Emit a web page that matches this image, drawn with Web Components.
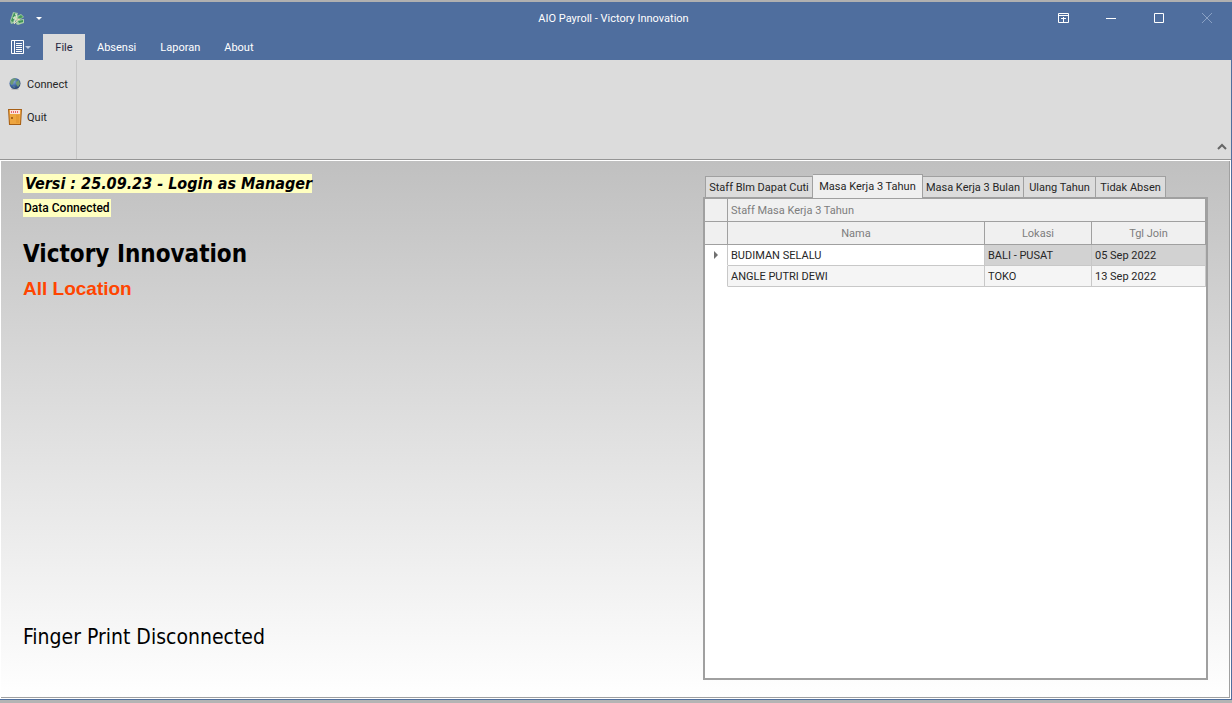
<!DOCTYPE html>
<html lang="id">
<head>
<meta charset="utf-8">
<title>AIO Payroll - Victory Innovation</title>
<style>
  html, body { height: 100%; margin: 0; }
  body {
    --ui: Tahoma, Roboto, sans-serif;
    --display: Tahoma, "DejaVu Sans Condensed", "DejaVu Sans", sans-serif;
    --blue: #4f6e9e;
    --face: #dcdcdc;
    --line: #a0a0a0;
    font: 11px/16px var(--ui);
    color: #262626;
    background: #b4b4b4;
  }
</style>
</head>
<body>
<app-window>
  <title-bar slot="title">AIO Payroll - Victory Innovation</title-bar>
  <ribbon-tabs slot="tabs"></ribbon-tabs>
  <ribbon-panel slot="ribbon">
    <ribbon-button icon="globe">Connect</ribbon-button>
    <ribbon-button icon="door">Quit</ribbon-button>
  </ribbon-panel>
  <status-summary></status-summary>
  <staff-panel></staff-panel>
</app-window>

<script>
const define = (name, html, setup) => customElements.define(name, class extends HTMLElement {
  connectedCallback() {
    if (this.shadowRoot) return;
    const root = this.attachShadow({ mode: 'open' });
    root.innerHTML = html;
    if (setup) setup(this, root);
  }
});

define('app-window', `
  <style>
    :host { display: flex; flex-direction: column; box-sizing: border-box; min-height: 100vh;
      border-top: 2px solid #b0b0b0; border-bottom: 3px solid #b4b4b4; }
    .frame { flex: 1; display: flex; flex-direction: column; background: var(--blue);
      border-right: 1px solid var(--blue); border-bottom: 1px solid var(--blue); }
    main { flex: 1; display: flex; background: linear-gradient(#c0c0c0, #fff); border: 1px solid #fff; }
    .edge { flex: 1; display: flex; border-right: 1px solid var(--line); border-bottom: 1px solid var(--line); }
  </style>
  <div class="frame">
    <slot name="title"></slot>
    <slot name="tabs"></slot>
    <slot name="ribbon"></slot>
    <main><div class="edge"><slot></slot></div></main>
  </div>`);

define('title-bar', `
  <style>
    :host { display: grid; grid-template-columns: 1fr auto 1fr; align-items: center; height: 32px; color: #fff; }
    .start { display: flex; align-items: center; gap: 5px; padding-left: 8px; }
    .end { display: flex; justify-content: flex-end; }
    .name { padding: 2px 4px 0 0; }
    button { border: 0; padding: 0; background: none; color: inherit; display: grid; place-items: center; height: 32px; }
    .end button { width: 48px; }
    .start button { width: 16px; }
    svg { display: block; }
  </style>
  <div class="start">
    <svg width="18" height="18" viewBox="0 0 18 18" aria-hidden="true">
      <path d="M2 12 5 3l5 1-3 10-4 1z" fill="#9cc7a0"/>
      <path d="M3 12l3-8 2 1-3 8z" fill="#3f9458"/>
      <path d="M7 5l2 1-3 8" fill="none" stroke="#dcebd6"/>
      <path d="M5 8l1 2M7 7l-1 3" stroke="#d4e6cc"/>
      <path d="M9 7l4-2 3 3-5 3-2-1z" fill="#9fcba0"/>
      <path d="M10 8l3-2 2 2-4 2z" fill="#439a5a"/>
      <path d="M9 11l7-1v4l-6 2-2-1z" fill="#a9d0a6"/>
      <path d="M10 12l5-1v2l-4 1z" fill="#3f9458"/>
      <path d="M8 8l1 4-3 3M9 11l3-1" fill="none" stroke="#e8dcb4" stroke-width="1"/>
    </svg>
    <button type="button" aria-label="Quick access"><svg width="6" height="3"><path d="M0 0h6L3 3z" fill="#fff"/></svg></button>
  </div>
  <div class="name"><slot></slot></div>
  <div class="end">
    <button type="button" aria-label="Ribbon display options"><svg width="11" height="10" fill="none" stroke="#fff"><path d="M.5.5h10v9H.5zM0 2.500h11M5.500 4v5M3 5.500h5"/></svg></button>
    <button type="button" aria-label="Minimize"><svg width="10" height="10" stroke="#fff"><path d="M0 5.500h10"/></svg></button>
    <button type="button" aria-label="Maximize"><svg width="10" height="10" fill="none" stroke="#fff"><path d="M.5.5h9v9h-9z"/></svg></button>
    <button type="button" aria-label="Close"><svg width="10" height="10" stroke="#8aa1c4"><path d="M0 0l10 10M10 0L0 10"/></svg></button>
  </div>`);

define('ribbon-tabs', `
  <style>
    :host { display: flex; height: 26px; color: #fff; }
    nav { display: flex; }
    button { border: 0; background: none; font: inherit; color: inherit; padding: 2px 12px 0; height: 26px; }
    .menu { width: 43px; padding: 0 0 0 11px; display: flex; align-items: center; gap: 1px; }
    .on { background: var(--face); color: #262640; padding: 2px 0 0; width: 42px; }
    svg { display: block; }
  </style>
  <button class="menu" type="button" aria-label="Application menu">
    <svg width="13" height="14" fill="none" stroke="#fff"><path d="M.5.5h12v13H.5zM3.500 0v14M5 3.500h6M5 5.500h6M5 7.500h6M5 9.500h6M5 11.500h6"/></svg>
    <svg width="6" height="3"><path d="M0 0h6L3 3z" fill="#bccadf"/></svg>
  </button>
  <nav>
    <button type="button" class="on">File</button>
    <button type="button">Absensi</button>
    <button type="button">Laporan</button>
    <button type="button">About</button>
  </nav>`);

define('ribbon-panel', `
  <style>
    :host { display: flex; height: 99px; background: var(--face); border-bottom: 1px solid #959595; }
    .group { width: 76px; border-right: 1px solid #c6c6c6; padding-top: 7px; }
    .space { flex: 1; display: flex; justify-content: flex-end; align-items: flex-end; padding: 0 4px 8px; }
    button { border: 0; padding: 0; background: none; }
    svg { display: block; }
  </style>
  <div class="group"><slot></slot></div>
  <div class="space"><button type="button" aria-label="Collapse the ribbon"><svg width="10" height="8" fill="none" stroke="#666" stroke-width="2"><path d="M1 6l4-4 4 4"/></svg></button></div>`);

const ICONS = {
  globe: `<svg width="15" height="16" viewBox="0 0 15 16" aria-hidden="true">
    <defs><radialGradient id="g" cx=".35" cy=".3" r=".8"><stop offset="0" stop-color="#8fb0de"/><stop offset=".5" stop-color="#456ba6"/><stop offset="1" stop-color="#1f3865"/></radialGradient></defs>
    <ellipse cx="7" cy="13" rx="4" ry="1" fill="#bbb"/>
    <circle cx="7" cy="7.500" r="5.500" fill="url(#g)"/>
    <path d="M2 6l2-3 3-1 1 2-2 1-1 3-2 1zM8 6l3-2 1 4-2 3-2-3zM5 10l2 1-1 1z" fill="#6f9a74"/></svg>`,
  door: `<svg width="15" height="16" viewBox="0 0 15 16" aria-hidden="true">
    <path d="M0 0h14l-1 16H1z" fill="#a65f16"/><path d="M1 1h12l-1 14H2z" fill="#eda540"/>
    <path d="M8 6h3v8H8z" fill="#e59a35"/><path d="M2 1h10v4H2z" fill="#fbe3dc"/>
    <path d="M3 3h8" stroke="#e8636a" stroke-width="2" stroke-dasharray="1 1"/><circle cx="4" cy="9" r="1" fill="#8f4d0e"/></svg>`
};
define('ribbon-button', `
  <style>
    :host { display: block; }
    button { display: flex; align-items: center; gap: 4px; width: 100%; height: 33px; padding: 0 0 0 8px;
      border: 0; background: none; font: inherit; color: inherit; }
    .label { padding-top: 2px; }
    svg { display: block; }
  </style>
  <button type="button"><span class="icon"></span><span class="label"><slot></slot></span></button>`,
  (el, root) => { root.querySelector('.icon').innerHTML = ICONS[el.getAttribute('icon')]; });

define('status-summary', `
  <style>
    :host { flex: 1; display: flex; flex-direction: column; align-items: flex-start; padding: 13px 22px 44px; color: #000; }
    p, h1, h2 { margin: 0; white-space: nowrap; }
    mark { background: #ffffc0; color: inherit; display: block; }
    .version { font: italic bold 16px/18px var(--display); padding: 1px 0 0 2px; }
    .data { font: 500 12px/18px var(--ui); padding: 0 1px; margin-top: 6px; }
    h1 { font: bold 24px/32px var(--display); margin-top: 21px; }
    h2 { font: bold 19px/24px "Liberation Sans", Arial, sans-serif; color: #ff4500; margin-top: 7px; }
    .finger { font: 21px/32px var(--display); margin-top: auto; }
  </style>
  <mark class="version">Versi : 25.09.23 - Login as Manager</mark>
  <mark class="data">Data Connected</mark>
  <h1>Victory Innovation</h1>
  <h2>All Location</h2>
  <p class="finger">Finger Print Disconnected</p>`);

define('staff-panel', `
  <style>
    :host { flex: 0 0 505px; display: flex; flex-direction: column; padding: 13px 21px 17px 0; }
    .tabs { display: flex; align-items: flex-end; padding-left: 2px; height: 23px; }
    .tabs button { font: inherit; color: inherit; height: 21px; padding: 2px 0 0; white-space: nowrap;
      background: var(--face); border: solid var(--line); border-width: 1px 1px 0 0; }
    .tabs button:first-child { border-left-width: 1px; }
    .tabs .on { height: 24px; margin-bottom: -1px; padding: 0; background: #f0f0f0; position: relative; }
    .box { flex: 1; border: 2px solid var(--line); background: #fff; }
    table { width: 100%; table-layout: fixed; border-collapse: separate; border-spacing: 0; }
    th, td { box-sizing: border-box; padding: 2px 3px 0; text-align: left; font-weight: normal; white-space: nowrap;
      border: solid #c8c8c8; border-width: 0 1px 1px 0; height: 21px; line-height: 16px; }
    thead th, thead td { height: 23px; background: #f0f0f0; color: #7d7d7d; border-color: var(--line); text-align: center; }
    thead .band { text-align: left; }
    tbody td:first-child { border-bottom-color: transparent; padding-top: 0; }
    tbody td:first-child svg { display: block; margin: 0 auto; }
    .sel td { background: #d2d2d2; }
    .sel td:nth-child(-n+2) { background: #fff; }
    .alt td:nth-child(n+2) { background: #f5f5f5; }
  </style>
  <div class="tabs" role="tablist">
    <button type="button" role="tab" style="width:108px">Staff Blm Dapat Cuti</button>
    <button type="button" role="tab" class="on" aria-selected="true" style="width:110px">Masa Kerja 3 Tahun</button>
    <button type="button" role="tab" style="width:101px">Masa Kerja 3 Bulan</button>
    <button type="button" role="tab" style="width:72px">Ulang Tahun</button>
    <button type="button" role="tab" style="width:70px">Tidak Absen</button>
  </div>
  <div class="box">
    <table>
      <colgroup><col style="width:23px"><col><col style="width:107px"><col style="width:114px"></colgroup>
      <thead>
        <tr><td></td><th class="band" colspan="3">Staff Masa Kerja 3 Tahun</th></tr>
        <tr><td></td><th scope="col">Nama</th><th scope="col">Lokasi</th><th scope="col">Tgl Join</th></tr>
      </thead>
      <tbody>
        <tr class="sel"><td><svg width="4" height="8"><path d="M0 0l4 4-4 4z" fill="#707070"/></svg></td><td>BUDIMAN SELALU</td><td>BALI - PUSAT</td><td>05 Sep 2022</td></tr>
        <tr class="alt"><td></td><td>ANGLE PUTRI DEWI</td><td>TOKO</td><td>13 Sep 2022</td></tr>
      </tbody>
    </table>
  </div>`);
</script>
</body>
</html>
